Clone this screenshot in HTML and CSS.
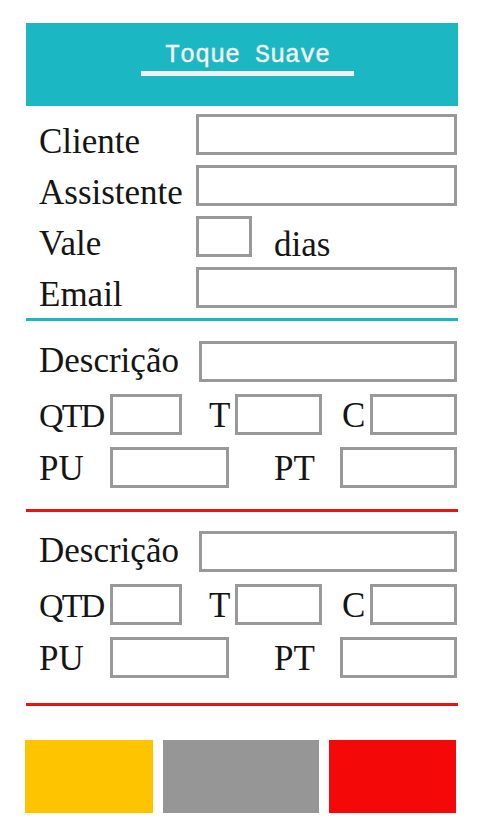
FILE: index.html
```html
<!DOCTYPE html>
<html lang="pt">
<head>
<meta charset="utf-8">
<title>Toque Suave</title>
<link rel="stylesheet" href="styles.css">
</head>
<body>
<div class="page">
  <header class="head">
    <div class="title">Toque Suave</div>
    <div class="bar"></div>
  </header>

  <section class="client">
    <div class="row"><span class="lbl">Cliente</span><div class="box wide"></div></div>
    <div class="row"><span class="lbl">Assistente</span><div class="box wide"></div></div>
    <div class="row"><span class="lbl">Vale</span><div class="box tiny"></div><span class="lbl unit">dias</span></div>
    <div class="row"><span class="lbl">Email</span><div class="box wide"></div></div>
  </section>
  <div class="rule teal"></div>

  <section class="item">
    <div class="irow desc"><span class="lbl">Descrição</span><div class="box dbox"></div></div>
    <div class="irow qrow">
      <span class="lbl lq">QTD</span><div class="box q"></div>
      <span class="lbl lt">T</span><div class="box t"></div>
      <span class="lbl lc">C</span><div class="box c"></div>
    </div>
    <div class="irow prow">
      <span class="lbl pu">PU</span><div class="box pub"></div>
      <span class="lbl pt">PT</span><div class="box ptb"></div>
    </div>
  </section>
  <div class="rule red"></div>

  <section class="item second">
    <div class="irow desc"><span class="lbl">Descrição</span><div class="box dbox"></div></div>
    <div class="irow qrow">
      <span class="lbl lq">QTD</span><div class="box q"></div>
      <span class="lbl lt">T</span><div class="box t"></div>
      <span class="lbl lc">C</span><div class="box c"></div>
    </div>
    <div class="irow prow">
      <span class="lbl pu">PU</span><div class="box pub"></div>
      <span class="lbl pt">PT</span><div class="box ptb"></div>
    </div>
  </section>
  <div class="rule red last"></div>

  <div class="actions">
    <div class="btn yellow"></div>
    <div class="btn gray"></div>
    <div class="btn redbtn"></div>
  </div>
</div>
</body>
</html>
```

FILE: styles.css
```css
html, body {
  margin: 0;
  padding: 0;
  background: #ffffff;
}

.page {
  width: 432px;
  margin-left: 26px;
  padding-top: 23px;
  font-family: "Liberation Serif", "DejaVu Serif", serif;
  color: #151515;
}

.head {
  height: 83px;
  background: #1bb7c3;
  padding-left: 11px;
  box-sizing: border-box;
  display: flex;
  flex-direction: column;
  align-items: center;
  padding-top: 20px;
}

.title {
  font-family: "Liberation Mono", "DejaVu Sans Mono", monospace;
  font-size: 25px;
  line-height: 25px;
  color: #f4f4f4;
  -webkit-text-stroke: 0.4px #f4f4f4;
}

.bar {
  width: 213px;
  height: 5px;
  margin-top: 3px;
  background: #f1f1f3;
}

.lbl {
  font-size: 35px;
  line-height: 35px;
  white-space: nowrap;
}

.box {
  height: 41px;
  box-sizing: border-box;
  border: 3px solid #999999;
  background: #ffffff;
}

/* client section */
.client {
  padding: 8px 0 0 13px;
  display: flex;
  flex-direction: column;
  gap: 10px;
}

.row {
  display: flex;
  align-items: flex-end;
}

.row .lbl {
  width: 157px;
  margin-bottom: -4px;
}

.row .lbl.unit {
  width: auto;
  margin-left: 22px;
  margin-bottom: -5px;
}

.wide {
  width: 261px;
}

.tiny {
  width: 56px;
}

.rule {
  height: 3px;
}

.rule.teal {
  background: #1bb7c3;
  margin-top: 10px;
}

.rule.red {
  background: #ee1111;
  margin-top: 21px;
}

.rule.red.last {
  margin-top: 25px;
}

/* item sections */
.item {
  padding: 20px 0 0 13px;
  display: flex;
  flex-direction: column;
  gap: 12px;
}

.item.second {
  padding-top: 19px;
}

.irow {
  display: flex;
  align-items: flex-end;
}

.irow .lbl {
  margin-bottom: 2px;
}

.desc .lbl {
  width: 160px;
  margin-bottom: 4px;
}

.dbox {
  width: 258px;
}

.qrow .lbl.lq {
  width: 71px;
  font-size: 34px;
  letter-spacing: -1.8px;
}

.q {
  width: 72px;
}

.qrow .lbl.lt {
  width: 53px;
  padding-left: 27px;
  box-sizing: border-box;
}

.t {
  width: 87px;
}

.qrow .lbl.lc {
  width: 48px;
  padding-left: 20px;
  box-sizing: border-box;
}

.c {
  width: 87px;
}

.prow .lbl.pu {
  width: 71px;
}

.pub {
  width: 119px;
}

.prow .lbl.pt {
  width: 111px;
  padding-left: 45px;
  box-sizing: border-box;
}

.ptb {
  width: 117px;
}

/* buttons */
.actions {
  margin-top: 34px;
  margin-left: -1px;
  display: grid;
  grid-template-columns: 128px 156px 127px;
  gap: 10px;
}

.btn {
  height: 73px;
}

.yellow {
  background: #ffc400;
}

.gray {
  background: #969696;
}

.redbtn {
  background: #f50808;
}
```
